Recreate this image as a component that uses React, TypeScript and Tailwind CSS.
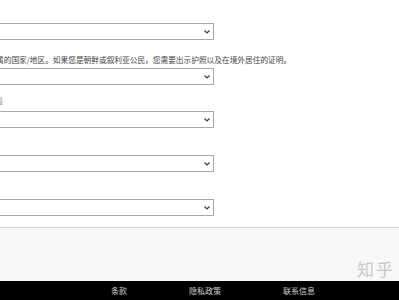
import React from "react";

const font = { fontFamily: '"Microsoft YaHei", "Noto Sans CJK SC", "Liberation Sans", sans-serif' };

function Chevron() {
  return (
    <svg width="6" height="4" viewBox="0 0 6 4" className="block">
      <polyline points="0.5,0.5 3,3 5.5,0.5" fill="none" stroke="#3a3a3a" strokeWidth="1.2" />
    </svg>
  );
}

function SelectBox({ top }: { top: string }) {
  return (
    <div className={`${top} -ml-[8px] w-[222px] h-[17px] border border-[#a9a9a9] bg-white flex items-center justify-end pr-[3px]`}>
      <Chevron />
    </div>
  );
}

export default function App() {
  return (
    <div className="w-[399px] h-[300px] overflow-hidden bg-white flex flex-col" style={font}>
      <div className="flex flex-col h-[227px]">
        <SelectBox top="mt-[23px]" />
        <p className="mt-[15px] -ml-[4px] h-[10px] leading-[10px] text-[7.7px] text-[#444] whitespace-nowrap">
          属的国家/地区。如果您是朝鲜或叙利亚公民，您需要出示护照以及在境外居住的证明。
        </p>
        <SelectBox top="mt-[3px]" />
        <p className="mt-[11px] -ml-[5px] h-[10px] leading-[10px] text-[8px] text-[#aaa] whitespace-nowrap">籍</p>
        <SelectBox top="mt-[5px]" />
        <SelectBox top="mt-[27px]" />
        <SelectBox top="mt-[27px]" />
      </div>
      <div className="h-[54px] border-t border-[#d6d6d6] bg-[#f8f8f8] flex justify-end items-end pr-[4px] pb-[2px]">
        <span className="text-[17px] leading-[20px] text-[#c8c8c8] tracking-[2px]">知乎</span>
      </div>
      <div className="h-[19px] bg-black flex items-center text-[8px] text-[#d0d0d0]">
        <span className="ml-[111px]">条款</span>
        <span className="ml-[62px]">隐私政策</span>
        <span className="ml-[62px]">联系信息</span>
      </div>
    </div>
  );
}
